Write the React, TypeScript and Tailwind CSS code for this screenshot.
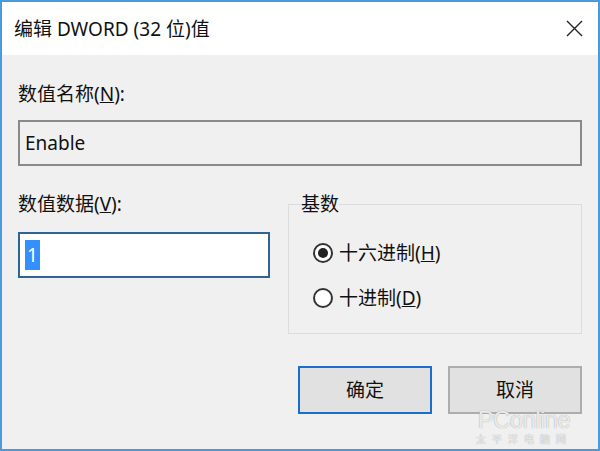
import { ReactNode } from 'react'

function Radio({ checked, children }: { checked?: boolean; children: ReactNode }) {
  return (
    <label className="flex items-center gap-[6px] leading-[24px]">
      <span className="flex size-[20px] items-center justify-center rounded-full border-2 border-[#333] bg-white">
        {checked && <span className="size-[10px] rounded-full bg-[#222]" />}
      </span>
      <span>{children}</span>
    </label>
  )
}

export default function App() {
  return (
    <div className="relative flex h-[451px] w-[600px] flex-col border-2 border-[#4a9ae0] bg-[#f0f0f0] font-['Noto_Sans','Noto_Sans_CJK_SC',sans-serif] text-[19px] text-[#111]">
      <div className="flex h-[53px] items-center justify-between bg-white pl-3 pr-[15px]">
        <span className="leading-[24px]">编辑 DWORD (32 位)值</span>
        <svg width="17" height="17" viewBox="0 0 17 17" className="text-[#222]">
          <path d="M1 1 L16 16 M16 1 L1 16" stroke="currentColor" strokeWidth="1.4" />
        </svg>
      </div>

      <div className="flex flex-col px-4 pt-[27px]">
        <div className="leading-[24px]">
          数值名称(<u>N</u>):
        </div>
        <div className="mt-[14px] flex h-[46px] items-center border-2 border-[#8a8a8a] bg-[#f0f0f0] pl-[5px]">
          Enable
        </div>

        <div className="mt-[26px] flex justify-between">
          <div className="flex w-[252px] flex-col">
            <div className="leading-[24px]">
              数值数据(<u>V</u>):
            </div>
            <div className="mt-4 flex h-[46px] items-center border-2 border-[#2f6595] bg-white pl-[5px]">
              <span className="bg-[#3390ff] px-[2px] leading-[30px] text-white">1</span>
            </div>
          </div>

          <fieldset className="h-[142px] w-[294px] border border-[#dcdcdc]">
            <legend className="ml-3 leading-[24px]">基数</legend>
            <div className="flex flex-col gap-[21px] pt-[25px] pl-6">
              <Radio checked>
                十六进制(<u>H</u>)
              </Radio>
              <Radio>
                十进制(<u>D</u>)
              </Radio>
            </div>
          </fieldset>
        </div>

        <div className="mt-8 flex justify-end gap-4">
          <button className="h-[48px] w-[134px] border-2 border-[#1a6fcc] bg-[#e1e1e1] leading-[24px]">确定</button>
          <button className="h-[48px] w-[134px] border-2 border-[#adadad] bg-[#e1e1e1] leading-[24px]">取消</button>
        </div>
      </div>

      <div className="pointer-events-none absolute top-[408px] right-[26px] flex flex-col items-center text-white/80 [text-shadow:0_0_1px_#8a8a8a]">
        <span className="font-['Liberation_Sans',sans-serif] text-[24px] leading-[20px] tracking-tight">PConline</span>
        <span className="mt-[3px] text-[10px] leading-[12px] tracking-[6px]">太平洋电脑网</span>
      </div>
    </div>
  )
}
